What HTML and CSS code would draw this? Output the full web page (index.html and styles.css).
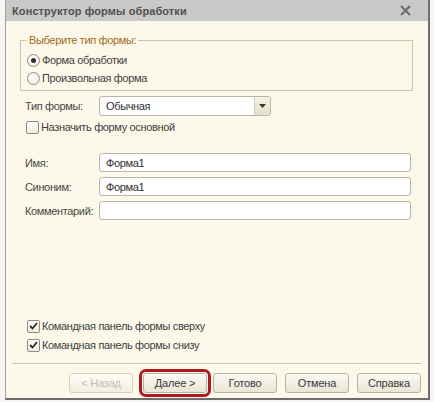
FILE: index.html
```html
<!DOCTYPE html>
<html lang="ru">
<head>
<meta charset="utf-8">
<title>Конструктор формы обработки</title>
<link rel="stylesheet" href="styles.css">
</head>
<body>
<div class="window">
  <div class="titlebar">
    <span class="title">Конструктор формы обработки</span>
    <svg class="close" width="11" height="11" viewBox="0 0 11 11"><path d="M1 1 L10 10 M10 1 L1 10" stroke="#6a6a6a" stroke-width="2" fill="none"/></svg>
  </div>
  <div class="content">
    <fieldset class="group">
      <legend class="legend">Выберите тип формы:</legend>
      <div class="opt"><span class="radio checked"></span><span>Форма обработки</span></div>
      <div class="opt"><span class="radio"></span><span>Произвольная форма</span></div>
    </fieldset>

    <div class="field-row type-row">
      <span class="label">Тип формы:</span>
      <div class="select">
        <span class="select-text">Обычная</span>
        <span class="select-btn"><svg width="7" height="4" viewBox="0 0 7 4"><path d="M0 0 H7 L3.5 4 Z" fill="#3a3a2a"/></svg></span>
      </div>
    </div>

    <div class="check-row main-check"><span class="checkbox"></span><span>Назначить форму основной</span></div>

    <div class="fields">
      <div class="field-row"><span class="label">Имя:</span><div class="input">Форма1</div></div>
      <div class="field-row"><span class="label">Синоним:</span><div class="input">Форма1</div></div>
      <div class="field-row"><span class="label">Комментарий:</span><div class="input"></div></div>
    </div>

    <div class="spacer"></div>

    <div class="check-row bottom-check"><span class="checkbox checked"><svg width="9" height="8" viewBox="0 0 9 8"><path d="M1 4 L3.5 6.5 L8 1" stroke="#2a2a2a" stroke-width="1.8" fill="none"/></svg></span><span>Командная панель формы сверху</span></div>
    <div class="check-row bottom-check"><span class="checkbox checked"><svg width="9" height="8" viewBox="0 0 9 8"><path d="M1 4 L3.5 6.5 L8 1" stroke="#2a2a2a" stroke-width="1.8" fill="none"/></svg></span><span>Командная панель формы снизу</span></div>
  </div>
  <div class="separator"></div>
  <div class="buttons">
    <button class="btn disabled">&lt; Назад</button>
    <button class="btn highlighted">Далее &gt;</button>
    <button class="btn">Готово</button>
    <button class="btn">Отмена</button>
    <button class="btn">Справка</button>
  </div>
</div>
</body>
</html>
```
FILE: styles.css
```css
html, body {
  margin: 0;
  padding: 0;
}
body {
  background: #f6f6f4;
  font-family: "Liberation Sans", Arial, sans-serif;
  font-size: 11px;
  letter-spacing: -0.35px;
  color: #3e3e3e;
  width: 434px;
  height: 402px;
  overflow: hidden;
}
.window {
  margin-left: 5px;
  width: 425px;
  height: 400px;
  box-sizing: border-box;
  border-left: 1px solid #a3a3a3;
  border-right: 2px solid #707070;
  border-bottom: 2px solid #6c6c6c;
  background: #fcf9ea;
  display: flex;
  flex-direction: column;
}
.titlebar {
  height: 21px;
  flex: none;
  background: #c9c9c9;
  display: flex;
  align-items: center;
  justify-content: space-between;
  padding: 0 17px 0 6px;
}
.title {
  font-weight: bold;
  color: #505050;
  font-size: 11px;
  letter-spacing: 0.1px;
}
.close {
  display: block;
}
.content {
  flex: 1;
  display: flex;
  flex-direction: column;
  padding: 0 15px 0 14px;
}
.group {
  margin: 12px 0 0 0;
  padding: 4px 0 3px 6px;
  border: 1px solid #cbc6a8;
  min-width: 0;
}
.legend {
  padding: 0 2px;
  margin-left: 0;
  color: #a36a26;
  line-height: 14px;
}
.opt {
  display: flex;
  align-items: center;
  height: 18px;
}
.radio {
  width: 11px;
  height: 11px;
  border: 1px solid #8c8c84;
  border-radius: 50%;
  background: radial-gradient(circle at 40% 40%, #ffffff, #e9e7de);
  margin-right: 2px;
  display: flex;
  align-items: center;
  justify-content: center;
  flex: none;
}
.radio.checked::after {
  content: "";
  width: 5px;
  height: 5px;
  border-radius: 50%;
  background: #2f2f2f;
}
.field-row {
  display: flex;
  align-items: center;
  padding-left: 5px;
}
.label {
  width: 74px;
  flex: none;
  color: #474747;
}
.type-row {
  margin-top: 5px;
}
.select {
  width: 172px;
  height: 20px;
  box-sizing: border-box;
  border: 1px solid #bab6a4;
  border-radius: 3px;
  background: #fff;
  display: flex;
  align-items: stretch;
}
.select-text {
  flex: 1;
  padding-left: 6px;
  display: flex;
  align-items: center;
  color: #2f2f2f;
}
.select-btn {
  width: 15px;
  border-left: 1px solid #d2cebd;
  background: linear-gradient(#f6f3e6, #e4dfcb);
  border-radius: 0 2px 2px 0;
  display: flex;
  align-items: center;
  justify-content: center;
}
.check-row {
  display: flex;
  align-items: center;
  height: 16px;
}
.main-check {
  margin-top: 3px;
  padding-left: 6px;
}
.bottom-check {
  padding-left: 7px;
  margin-top: 3px;
}
.checkbox {
  width: 11px;
  height: 11px;
  border: 1px solid #8c8c80;
  border-radius: 2px;
  background: linear-gradient(#ffffff, #eeebe0);
  margin-right: 2px;
  flex: none;
  display: flex;
  align-items: center;
  justify-content: center;
}
.fields {
  margin-top: 18px;
  display: flex;
  flex-direction: column;
  gap: 5px;
  padding-right: 2px;
}
.input {
  flex: 1;
  height: 19px;
  box-sizing: border-box;
  border: 1px solid #bab6a4;
  border-radius: 3px;
  background: #fff;
  padding-left: 6px;
  display: flex;
  align-items: center;
  color: #2f2f2f;
}
.spacer {
  flex: 1;
}
.separator {
  margin: 10px 7px 0 6px;
  height: 0;
  border-top: 1px solid #c6c2ae;
  border-bottom: 1px solid #ffffff;
  flex: none;
}
.buttons {
  display: flex;
  justify-content: flex-end;
  gap: 8px;
  padding: 8px 7px 5px 0;
  flex: none;
}
.btn {
  width: 64px;
  height: 20px;
  box-sizing: border-box;
  border: 1px solid #b7b3a0;
  border-radius: 3px;
  background: linear-gradient(#fbfaf4, #e9e5d6);
  font-family: "Liberation Sans", Arial, sans-serif;
  font-size: 11px;
  letter-spacing: -0.2px;
  color: #3a3a3a;
  padding: 0;
}
.btn.disabled {
  color: #c4c0ae;
  border-color: #d6d2c0;
  background: linear-gradient(#fdfcf6, #f1eee2);
}
.btn.highlighted {
  outline: 3px solid #ad1a22;
  outline-offset: 1px;
  margin-left: 2px;
  margin-right: -2px;
}
```
